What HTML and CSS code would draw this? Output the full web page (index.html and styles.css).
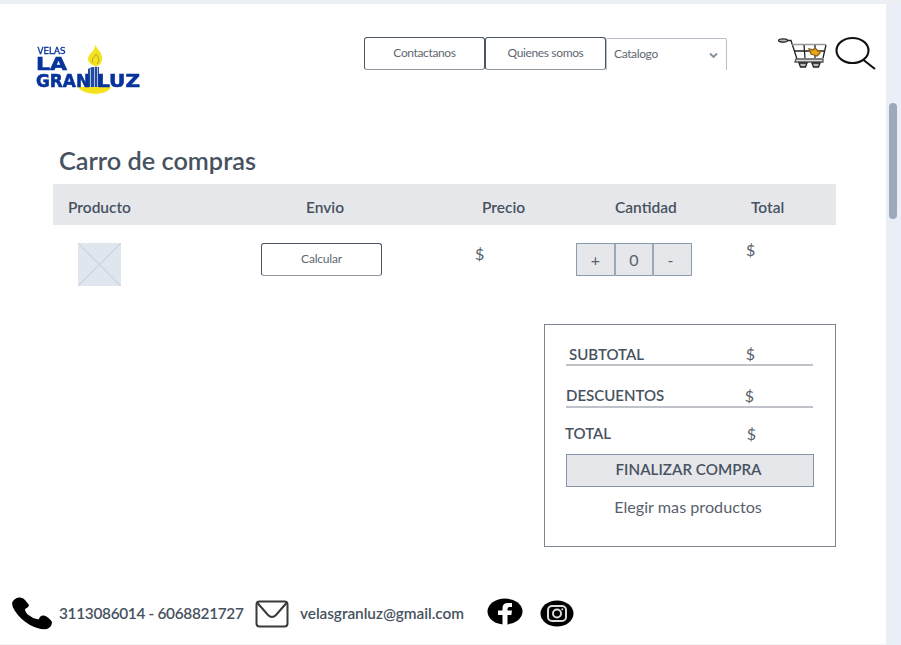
FILE: index.html
```html
<!DOCTYPE html>
<html lang="es">
<head>
<meta charset="utf-8">
<title>Carro de compras - Velas La Gran Luz</title>
<link rel="stylesheet" href="styles.css">
</head>
<body>
<div class="page">
  <header class="header">
    <svg class="logo" viewBox="0 0 108 54">
      <path class="flame" d="M61 24C52 21 53 15 57 11C60 8 61 6 61 3C65 9 69 12 68 18C67 22 65 24 61 24Z"/>
      <path class="flame-core" d="M59 21C57 16 61 15 62 12C65 16 66 19 63 22"/>
      <path class="dish" d="M44 45H77C74 54 49 54 44 45Z"/>
      <path class="candle" d="M54 27Q58 24 65 25V45H54Z"/>
      <path class="candle-light" d="M56.5 26.500V45M60.500 25V45M63.500 25V45"/>
      <text class="logo-small" x="3.500" y="11.500" textLength="28" lengthAdjust="spacingAndGlyphs">VELAS</text>
      <text class="logo-big" x="2" y="27.500" textLength="31" lengthAdjust="spacingAndGlyphs">LA</text>
      <text class="logo-big" x="2" y="44.500" textLength="54" lengthAdjust="spacingAndGlyphs">GRAN</text>
      <text class="logo-big" x="63" y="44.500" textLength="43" lengthAdjust="spacingAndGlyphs">LUZ</text>
    </svg>
    <nav class="nav">
      <a class="nav-button">Contactanos</a>
      <a class="nav-button">Quienes somos</a>
      <a class="nav-select"><span>Catalogo</span>
        <svg class="chevron" viewBox="0 0 9 7"><path d="M1 1.500L4.500 5L8 1.500"/></svg>
      </a>
    </nav>
    <svg class="cart" viewBox="0 0 50 34">
      <ellipse cx="6" cy="4.500" rx="4.500" ry="1.700" class="handle"/>
      <path d="M10 4.500H14L20 23"/>
      <path class="rim" d="M15 8.500H49"/>
      <path d="M49 9L46 22M17 15H47M27 9L28 22M38 9V22"/>
      <path class="flower" d="M32 13L36 14L38 12L41 15L44 15L42 18L40 20L37 19L34 18Z"/>
      <path class="rail" d="M19 23H46V26H18Z"/>
      <path class="wheel" d="M22 27H30L28.500 31H23.500ZM35 27H43L41.500 31H36.500Z"/>
    </svg>
    <svg class="search" viewBox="0 0 42 36">
      <ellipse cx="17.500" cy="15.500" rx="16" ry="12.500"/>
      <path d="M28.500 25L40 34"/>
    </svg>
  </header>

  <main class="main">
    <h1 class="title">Carro de compras</h1>
    <div class="cart-grid cart-head">
      <span class="h-product">Producto</span>
      <span class="h-shipping">Envio</span>
      <span class="h-price">Precio</span>
      <span class="h-quantity">Cantidad</span>
      <span class="h-total">Total</span>
    </div>
    <div class="cart-grid cart-row">
      <svg class="thumb" viewBox="0 0 43 43"><path d="M0 0L43 43M43 0L0 43"/></svg>
      <button class="calculate">Calcular</button>
      <span class="price">$</span>
      <div class="stepper"><span>+</span><span class="count">0</span><span>-</span></div>
      <span class="row-total">$</span>
    </div>
    <section class="summary">
      <div class="line subtotal"><b>SUBTOTAL</b><span>$</span></div>
      <div class="line discounts"><b>DESCUENTOS</b><span>$</span></div>
      <div class="line total"><b>TOTAL</b><span>$</span></div>
      <button class="checkout">FINALIZAR COMPRA</button>
      <a class="more">Elegir mas productos</a>
    </section>
  </main>

  <footer class="footer">
    <svg class="phone" viewBox="0 0 40 33">
      <path d="M0 6Q2 1 7 0.500Q11 0 13 3L17 8Q17 10 13 12Q13 16 18 19Q23 23 27 22Q28 18 32 18.500Q37 20 40 25Q40 30 35 32Q27 33 18 28Q8 22 3 14Q0 10 0 6Z"/>
    </svg>
    <span class="phone-text">3113086014 - 6068821727</span>
    <svg class="mail" viewBox="0 0 34 28">
      <rect x="1.500" y="1.500" width="31" height="25" rx="3"/>
      <path d="M2.500 3L13 15Q17 19 21 15L31.500 3"/>
    </svg>
    <span class="mail-text">velasgranluz@gmail.com</span>
    <svg class="facebook" viewBox="0 0 36 28">
      <ellipse cx="18" cy="13.500" rx="17.500" ry="13"/>
      <path d="M15.500 28V17H11V12.500H15.500V10Q15.500 5 21 5H25V9H22.500Q20.500 9 20.500 11V12.500H25L24.300 17H20.500V28Z"/>
    </svg>
    <svg class="instagram" viewBox="0 0 34 27">
      <ellipse cx="17" cy="13.500" rx="16.500" ry="13"/>
      <rect x="8" y="6" width="18" height="15" rx="4"/>
      <circle cx="17" cy="13.500" r="4"/>
      <circle class="dot" cx="22.300" cy="9.200" r="1"/>
    </svg>
  </footer>
</div>
<div class="track"><div class="thumb-bar"></div></div>
</body>
</html>
```
FILE: styles.css
```css
* { box-sizing: border-box; }
body {
  margin: 0;
  height: 645px;
  padding-top: 4px;
  display: flex;
  overflow: hidden;
  background: #ecf0f5;
  color: #475260;
  font-family: Lato, "Liberation Sans", sans-serif;
}
svg { display: block; flex: none; }
button { font: inherit; color: inherit; padding: 0; }
.page { width: 886px; height: 641px; background: #fff; border-bottom: 1px solid #f3f4f6; }
.track { width: 15px; background: #eaeef7; padding: 99px 0 0 3px; }
.thumb-bar { width: 8px; height: 116px; border-radius: 4px; background: #9ba9bb; }

.header { height: 137px; display: flex; align-items: flex-start; padding: 31px 0 0 34px; }
.logo { width: 108px; height: 54px; margin-top: 7px; filter: blur(0.3px); }
.flame, .dish { fill: #f4e21c; }
.flame-core { fill: none; stroke: #b5a52c; stroke-width: 1; }
.candle { fill: #234aa0; }
.candle-light { stroke: #a9bddd; stroke-width: 1; }
.logo text { fill: #07339b; font-family: "DejaVu Sans", sans-serif; font-weight: 700; }
.logo .logo-small { font-size: 8px; font-weight: 400; stroke: #07339b; stroke-width: 0.3; }
.logo .logo-big { font-size: 18px; stroke: #07339b; stroke-width: 0.6; }

.nav { display: flex; margin: 2px 0 0 222px; font-size: 12px; letter-spacing: -0.36px; line-height: 29px; color: #5f6873; }
.nav-button { width: 121px; height: 33px; border: 1px solid #4b5563; border-bottom-color: #9298a2; border-radius: 3px; text-align: center; }
.nav-select { width: 121px; height: 32px; margin-top: 1px; border: 1px solid #b8bfcc; border-bottom: 0; border-radius: 2px 2px 0 0; display: flex; justify-content: space-between; align-items: center; padding: 0 8px 0 7px; }
.nav-select span { margin-top: -2px; }
.chevron { width: 9px; height: 7px; margin-top: 1px; fill: none; stroke: #848d9b; stroke-width: 1.8; }
.cart { width: 50px; height: 34px; margin: 1px 0 0 50px; fill: none; stroke: #222; stroke-width: 1.3; }
.handle { fill: #bbb; }
.rim { stroke: #999; }
.rail { fill: #ddd; stroke: #555; }
.flower { fill: #eba61c; stroke: #8b601a; }
.wheel { fill: #bbb; }
.search { width: 42px; height: 36px; margin-left: 8px; fill: none; stroke: #111; stroke-width: 2.1; }

.main { width: 783px; margin-left: 53px; height: 445px; }
.title { margin: 0; padding-left: 6px; height: 43px; font-size: 25.3px; line-height: 39px; font-weight: 600; }
.cart-grid { display: grid; grid-template-columns: 208px 214px 101px 170px 90px; align-items: start; }
.cart-head { height: 41px; background: #e6e7eb; font-size: 15.5px; font-weight: 600; line-height: 46px; }
.h-product { padding-left: 15px; }
.h-shipping { padding-left: 45px; }
.h-price { padding-left: 7px; }
.h-quantity { padding-left: 39px; }
.h-total { padding-left: 5px; }
.cart-row { height: 99px; padding-top: 18px; font-size: 16px; color: #57616d; }
.thumb { width: 43px; height: 43px; margin-left: 25px; background: #dfe6ee; stroke: #cbd5df; stroke-width: 1.2; }
.calculate { width: 121px; height: 33px; padding-bottom: 2px; border: 1px solid #4b5563; border-bottom-color: #9298a2; border-radius: 3px; background: #fff; font-size: 12px; letter-spacing: -0.2px; color: #5f6873; }
.price { line-height: 22px; }
.row-total { line-height: 14px; }
.stepper { display: grid; grid-template-columns: 37px 40px 37px; width: 116px; height: 33px; border: 1px solid #8b9bb0; background: #e6e7eb; line-height: 32px; text-align: center; }
.stepper span:last-child { padding-right: 4px; }
.count { border: solid #9aa8ba; border-width: 0 2px; }

.summary { width: 292px; height: 223px; margin-left: 491px; border: 1px solid #7d8590; padding: 15px 22px 0 21px; font-size: 16px; text-align: center; }
.line { display: flex; justify-content: space-between; text-align: left; }
.line span { color: #57616d; }
.line b { font-weight: 600; font-size: 15px; }
.subtotal { height: 26px; line-height: 28px; padding: 0 58px 0 3px; border-bottom: 2px solid #bfc3c9; }
.discounts { height: 42px; line-height: 59px; padding: 0 59px 0 0; border-bottom: 2px solid #bfc3c9; }
.total { height: 46px; line-height: 51px; padding: 0 57px 0 0; margin-left: -1px; }
.checkout { display: block; width: 248px; height: 33px; padding: 0 3px 3px 0; border: 1px solid #8393aa; background: #e6e7eb; font-size: 15.2px; font-weight: 600; }
.more { display: block; margin-left: -3px; font-size: 16.2px; line-height: 40px; color: #57616d; }

.footer { display: flex; align-items: flex-start; padding: 7px 0 0 12px; font-size: 15.4px; font-weight: 600; line-height: 40px; }
.footer span { white-space: nowrap; }
.phone { width: 40px; height: 33px; margin-top: 4px; }
.phone-text { width: 196px; padding-left: 7px; letter-spacing: -0.32px; }
.mail { width: 34px; height: 28px; margin: 7px 0 0 7px; fill: none; stroke: #3a3a3a; stroke-width: 2; }
.mail-text { width: 198px; padding-left: 11px; letter-spacing: -0.05px; }
.facebook { width: 36px; height: 28px; margin-top: 5px; }
.facebook path { fill: #fff; }
.instagram { width: 34px; height: 27px; margin: 7px 0 0 17px; }
.instagram rect, .instagram circle { fill: none; stroke: #ddd; stroke-width: 2; }
.instagram .dot { fill: #ddd; stroke: none; }
```
